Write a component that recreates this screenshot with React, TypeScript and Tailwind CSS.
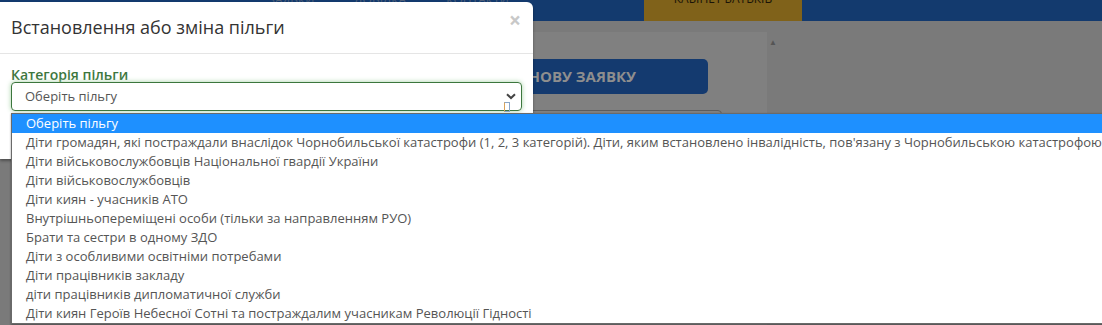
const options = [
  "Оберіть пільгу",
  "Діти громадян, які постраждали внаслідок Чорнобильської катастрофи (1, 2, 3 категорій). Діти, яким встановлено інвалідність, пов'язану з Чорнобильською катастрофою",
  "Діти військовослужбовців Національної гвардії України",
  "Діти військовослужбовців",
  "Діти киян - учасників АТО",
  "Внутрішньопереміщені особи (тільки за направленням РУО)",
  "Брати та сестри в одному ЗДО",
  "Діти з особливими освітніми потребами",
  "Діти працівників закладу",
  "діти працівників дипломатичної служби",
  "Діти киян Героїв Небесної Сотні та постраждалим учасникам Революції Гідності",
];

const Background = () => (
  <div className="flex flex-col">
    <div className="flex h-[21px] bg-[#133a6e] overflow-hidden">
      <div className="w-[644px] h-[6px] flex items-end gap-[40px] pl-[268px] text-[12px] leading-[12px] text-[#4e5f78] overflow-hidden">
        <span className="whitespace-nowrap">ЗАЯВКИ</span>
        <span className="whitespace-nowrap">ДОВІДКА</span>
        <span className="whitespace-nowrap">КОНТАКТИ</span>
      </div>
      <div className="w-[158px] bg-[#80621a] flex flex-col">
        <div className="h-[5px] flex items-end justify-center overflow-hidden text-[12px] leading-[12px] text-[#1a1408]">
          <span className="whitespace-nowrap">КАБІНЕТ БАТЬКІВ</span>
        </div>
      </div>
    </div>
    <div className="flex mt-[11px]">
      <div className="ml-[300px] w-[467px] h-[293px] bg-[#808080] pt-[27px] pr-[45px] flex flex-col">
        <div className="mr-[14px] h-[35px] rounded-[5px] bg-[#143a6f] flex items-center justify-end pr-[72px]">
          <span className="text-[15px] font-bold text-[#8e8e8e]">ПОДАТИ НОВУ ЗАЯВКУ</span>
        </div>
        <div className="mt-[16px] h-[34px] rounded-[4px] border border-[#5c5c5c]" />
      </div>
      <div className="pl-[2px] pt-[6px] text-[8px] leading-none text-[#555]">▲</div>
    </div>
  </div>
);

export default function App() {
  return (
    <div
      className="relative w-[1102px] h-[325px] overflow-hidden bg-[#7a7a7a]"
      style={{ fontFamily: '"Open Sans", "Noto Sans", sans-serif' }}
    >
      <Background />

      <div className="absolute left-0 top-[2px] w-[533px] h-[157px] bg-white rounded-tr-[6px] shadow-[0_2px_3px_rgba(0,0,0,0.35)]">
        <div className="h-[52px] flex items-center justify-between pl-[11px] pr-[12px] border-b border-[#e5e5e5]">
          <span className="text-[18px] text-[#333] leading-none -mt-[1px]">Встановлення або зміна пільги</span>
          <span className="text-[21px] font-bold text-[#c8c8c8] leading-none -mt-[14px]">×</span>
        </div>
        <div className="px-[11px] pt-[13px]">
          <div className="text-[14px] font-semibold leading-[15px] text-[#3c763d]">Категорія пільги</div>
          <div className="relative h-[29px] rounded-[4px] border border-[#3c763d] shadow-[0_0_5px_#a6d3a6] flex items-center pl-[13px]">
            <span className="text-[13px] text-[#555]">Оберіть пільгу</span>
            <svg className="absolute right-[5px] top-[10px]" width="10" height="7" viewBox="0 0 10 7">
              <path d="M1 1.2 L5 5 L9 1.2" fill="none" stroke="#444" strokeWidth="2" />
            </svg>
            <span className="absolute right-[11px] top-[19px] w-[6px] h-[10px] border border-[#8aa6c8] border-l-[#d9a35a]" />
          </div>
        </div>
      </div>

      <div className="absolute left-[11px] top-[113px] w-[1200px] bg-white border border-[#6a6a6a] shadow-[0_1px_2px_rgba(0,0,0,0.4)]">
        {options.map((o, i) => (
          <div
            key={i}
            className={
              i === 0
                ? "h-[19px] flex items-center pl-[14px] whitespace-nowrap text-[13px] bg-[#1e90ff] text-white"
                : "h-[19px] flex items-center pl-[14px] whitespace-nowrap text-[13px] text-[#555]"
            }
          >
            {o}
          </div>
        ))}
      </div>
    </div>
  );
}
